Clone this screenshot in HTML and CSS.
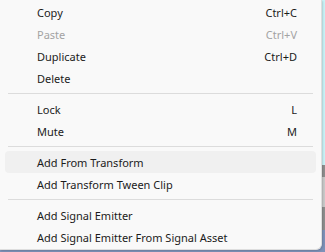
FILE: index.html
```html
<html>
<head>
<link rel="stylesheet" href="styles.css">
</head>
<body>
	<div class="menu">
		<div class="item"><span class="label">Copy</span><span class="key">Ctrl+C</span></div>
		<div class="item disabled"><span class="label">Paste</span><span class="key">Ctrl+V</span></div>
		<div class="item"><span class="label">Duplicate</span><span class="key">Ctrl+D</span></div>
		<div class="item"><span class="label">Delete</span></div>
		<div class="sep"></div>
		<div class="item"><span class="label">Lock</span><span class="key">L</span></div>
		<div class="item"><span class="label">Mute</span><span class="key">M</span></div>
		<div class="sep"></div>
		<div class="item hover"><span class="label">Add From Transform</span></div>
		<div class="item"><span class="label">Add Transform Tween Clip</span></div>
		<div class="sep"></div>
		<div class="item"><span class="label">Add Signal Emitter</span></div>
		<div class="item"><span class="label">Add Signal Emitter From Signal Asset</span></div>
	</div>
</body>
</html>
```

FILE: styles.css
```css
body {
	margin: 0;
	height: 252px;
	font-family: "Noto Sans", "Open Sans", sans-serif;
	font-size: 11px;
	background: linear-gradient(to bottom, #c9f2f6 0, #c9f2f6 165px, #8e8e8e 165px, #8e8e8e 177px, #c9c9c9 177px, #c9c9c9 207px, #8e8e8e 207px, #8e8e8e 230px, #7d91b8 230px);
	overflow: hidden;
}

.menu {
	width: 321px;
	padding-top: 1px;
	padding-bottom: 1px;
	background-color: #f9f9f9;
	border-right: 1px solid #dedede;
	border-bottom: 1px solid #dedede;
	border-bottom-right-radius: 6px;
	box-shadow: 1px 1px 2px rgba(0, 0, 0, 0.15);
}

.item {
	display: flex;
	align-items: center;
	justify-content: space-between;
	height: 22px;
	margin: 0 5px;
	padding-left: 32px;
	padding-right: 19px;
	border-radius: 4px;
	color: #1b1b1b;
}

.item.disabled {
	color: #a3a3a3;
}

.item.hover {
	background-color: #f0f0f0;
}

.sep {
	height: 1px;
	margin: 4px 8px 4px 8px;
	background-color: #dcdcdc;
}
```
